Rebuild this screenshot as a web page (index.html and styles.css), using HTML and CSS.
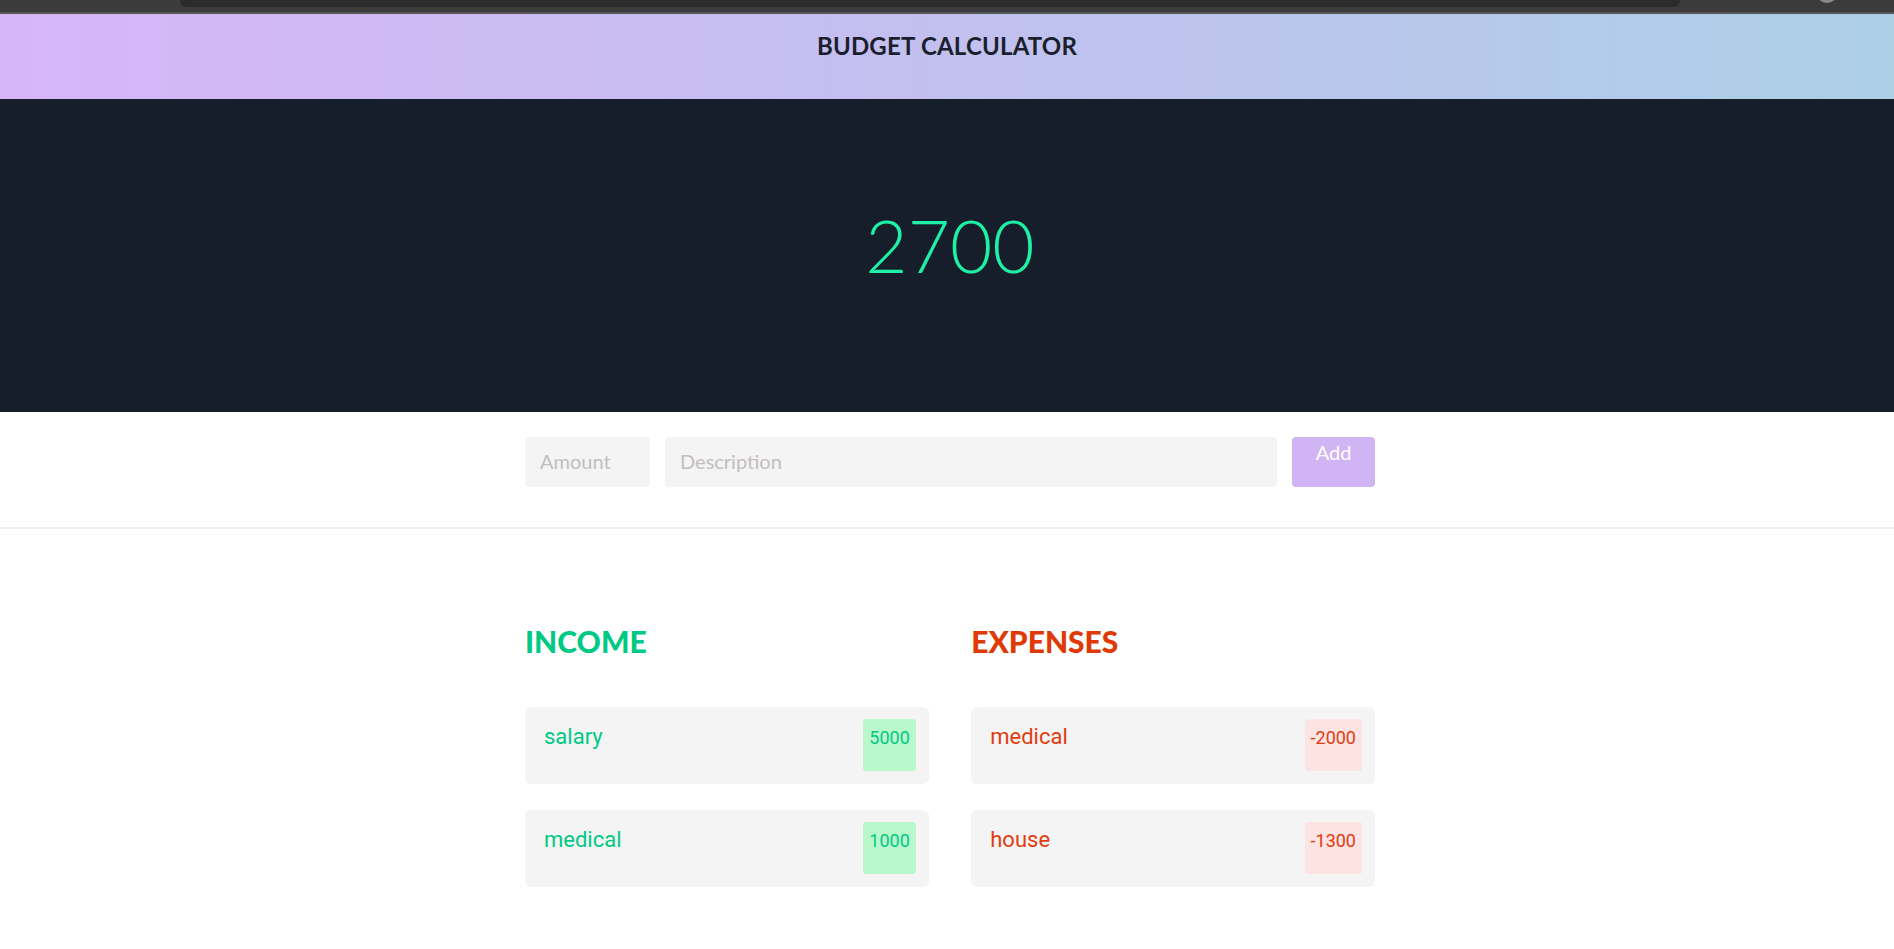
FILE: index.html
```html
<!DOCTYPE html>
<html lang="en">
<head>
<meta charset="utf-8">
<title>Budget Calculator</title>
<link rel="stylesheet" href="styles.css">
</head>
<body>
<div class="chrome">
  <div class="urlbar"></div>
  <div class="avatar"></div>
</div>
<header class="topbar">
  <h1 class="title">BUDGET CALCULATOR</h1>
</header>
<section class="balance">
  <div class="total">2700</div>
</section>
<section class="form-area">
  <form class="container entry-form">
    <input class="field amount" type="text" placeholder="Amount">
    <input class="field description" type="text" placeholder="Description">
    <button class="add-btn" type="button">Add</button>
  </form>
</section>
<main class="container lists">
  <div class="column income">
    <h2 class="col-title">INCOME</h2>
    <ul class="items">
      <li class="item"><span class="label">salary</span><span class="badge">5000</span></li>
      <li class="item"><span class="label">medical</span><span class="badge">1000</span></li>
    </ul>
  </div>
  <div class="column expenses">
    <h2 class="col-title">EXPENSES</h2>
    <ul class="items">
      <li class="item"><span class="label">medical</span><span class="badge">-2000</span></li>
      <li class="item"><span class="label">house</span><span class="badge">-1300</span></li>
    </ul>
  </div>
</main>
</body>
</html>
```

FILE: styles.css
```css
* { box-sizing: border-box; }
html, body { margin: 0; padding: 0; background: #ffffff; }
body { font-family: "Lato", "Liberation Sans", sans-serif; overflow: hidden; }

.chrome {
  height: 14px;
  background: #3b3b3b;
  border-bottom: 2px solid #565656;
  display: flex;
  align-items: flex-start;
  overflow: hidden;
}
.urlbar {
  margin-left: 180px;
  width: 1500px;
  height: 7px;
  background: #2b2b2b;
  border-radius: 0 0 6px 6px;
}
.avatar {
  margin-left: 136px;
  margin-top: -19px;
  width: 22px;
  height: 22px;
  border-radius: 50%;
  background: #8a8a8a;
}

.topbar {
  height: 85px;
  padding-top: 17px;
  background: linear-gradient(to right, #d7b6f8 0%, #c2c0ef 50%, #add0e7 100%);
  text-align: center;
}
.title {
  margin: 0;
  font-family: "Lato", sans-serif;
  font-weight: 700;
  font-size: 24px;
  letter-spacing: 0.2px;
  line-height: 29px;
  color: #1b1f2d;
}

.balance {
  height: 313px;
  padding-top: 102px;
  background: #171e2b;
  text-align: center;
}
.total {
  font-family: "Lato", sans-serif;
  font-weight: 300;
  font-size: 73px;
  line-height: 89px;
  color: #1ef0a6;
  padding-left: 6px;
}

.container {
  width: 850px;
  margin-left: calc(50% - 422px);
}

.form-area {
  padding: 25px 0 40px;
  border-bottom: 2px solid #f1f1f1;
}
.entry-form {
  display: flex;
  gap: 15px;
  height: 50px;
}
.field {
  border: none;
  outline: none;
  background: #f4f4f4;
  border-radius: 4px;
  height: 50px;
  padding: 0 15px 2px;
  font-family: "Lato", sans-serif;
  font-size: 20px;
  color: #333;
}
.field::placeholder { color: #c3bebe; }
.amount { width: 125px; }
.description { flex: 1; }
.add-btn {
  width: 83px;
  height: 50px;
  border: none;
  border-radius: 4px;
  background: #d1b4f4;
  color: #ffffff;
  font-family: "Lato", sans-serif;
  font-size: 20px;
  line-height: 24px;
  padding: 3px 0 0;
  display: flex;
  justify-content: center;
  align-items: flex-start;
}

.lists {
  display: flex;
  justify-content: space-between;
  padding-top: 95px;
}
.column { width: 47.5%; }
.col-title {
  margin: 0 0 48px;
  font-family: "Lato", sans-serif;
  font-weight: 900;
  font-size: 30px;
  line-height: 35px;
}
.income .col-title { color: #00c985; }
.expenses .col-title { color: #df3a06; }

.items {
  list-style: none;
  margin: 0;
  padding: 0;
  display: flex;
  flex-direction: column;
  gap: 26px;
}
.item {
  display: flex;
  justify-content: space-between;
  align-items: flex-start;
  background: #f4f4f4;
  border-radius: 6px;
  padding: 12px 13px 13px 19px;
  font-family: "Roboto", sans-serif;
}
.label {
  font-size: 22px;
  line-height: 26px;
  margin-top: 5px;
}
.badge {
  height: 52px;
  padding: 8px 6px 0;
  border-radius: 3px;
  font-size: 18px;
  line-height: 21px;
}
.income .label, .income .badge { color: #00c985; }
.income .badge { background: #b9f8cb; }
.expenses .label, .expenses .badge { color: #e03c10; }
.expenses .badge { background: #fee3e3; }
```
